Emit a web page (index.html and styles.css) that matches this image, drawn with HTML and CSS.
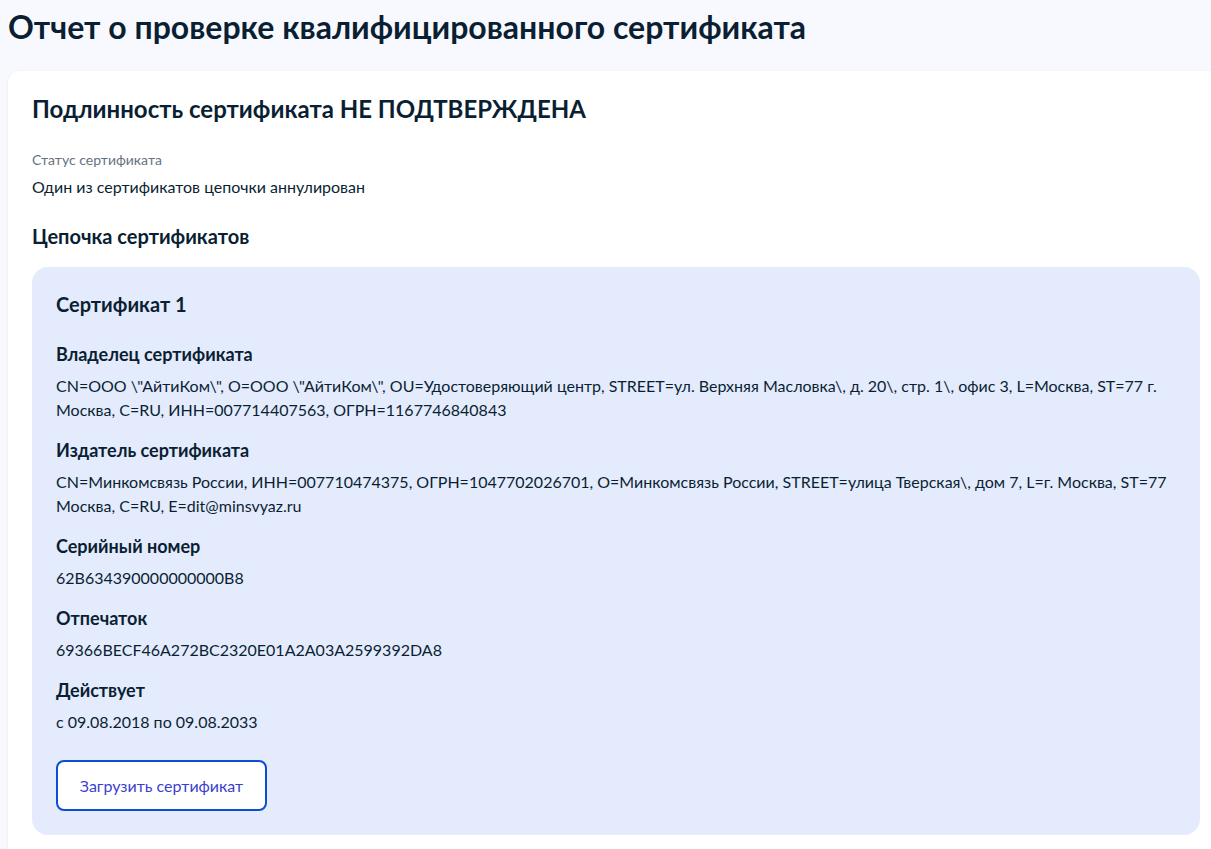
FILE: index.html
```html
<!DOCTYPE html>
<html lang="ru">
<head>
<meta charset="utf-8">
<title>Отчет о проверке квалифицированного сертификата</title>
<link rel="stylesheet" href="styles.css">
</head>
<body>
<main class="page">
  <h1 class="page-title">Отчет о проверке квалифицированного сертификата</h1>
  <section class="card">
    <h2 class="card-title">Подлинность сертификата НЕ ПОДТВЕРЖДЕНА</h2>
    <div class="status">
      <div class="status-label">Статус сертификата</div>
      <div class="status-value">Один из сертификатов цепочки аннулирован</div>
    </div>
    <h3 class="chain-title">Цепочка сертификатов</h3>
    <div class="cert">
      <h4 class="cert-title">Сертификат 1</h4>
      <div class="fields">
        <div class="field">
          <div class="field-name">Владелец сертификата</div>
          <div class="field-value">CN=ООО \"АйтиКом\", O=ООО \"АйтиКом\", OU=Удостоверяющий центр, STREET=ул. Верхняя Масловка\, д. 20\, стр. 1\, офис 3, L=Москва, ST=77 г. Москва, C=RU, ИНН=007714407563, ОГРН=1167746840843</div>
        </div>
        <div class="field">
          <div class="field-name">Издатель сертификата</div>
          <div class="field-value">CN=Минкомсвязь России, ИНН=007710474375, ОГРН=1047702026701, O=Минкомсвязь России, STREET=улица Тверская\, дом 7, L=г. Москва, ST=77 Москва, C=RU, E=dit@minsvyaz.ru</div>
        </div>
        <div class="field">
          <div class="field-name">Серийный номер</div>
          <div class="field-value">62B634390000000000B8</div>
        </div>
        <div class="field">
          <div class="field-name">Отпечаток</div>
          <div class="field-value">69366BECF46A272BC2320E01A2A03A2599392DA8</div>
        </div>
        <div class="field">
          <div class="field-name">Действует</div>
          <div class="field-value">с 09.08.2018 по 09.08.2033</div>
        </div>
      </div>
      <button class="btn-outline" type="button">Загрузить сертификат</button>
    </div>
  </section>
</main>
</body>
</html>
```

FILE: styles.css
```css
html, body {
  margin: 0;
  padding: 0;
  background: #f8f9fe;
  overflow: hidden;
}

body {
  font-family: Lato, "Noto Sans", Arial, sans-serif;
  color: #0b1f33;
}

.page {
  padding: 7px 0 0 8px;
  width: 1216px;
}

.page-title {
  margin: 0;
  font-size: 32px;
  line-height: 40px;
  font-weight: 700;
  color: #0b1f33;
}

.card {
  margin-top: 24px;
  background: #ffffff;
  border-radius: 12px;
  padding: 24px 24px 24px 24px;
  box-shadow: 0 1px 4px rgba(11, 31, 51, 0.06);
}

.card-title {
  margin: 0;
  font-size: 24px;
  line-height: 28px;
  font-weight: 700;
}

.status {
  margin-top: 27px;
  display: flex;
  flex-direction: column;
  gap: 5px;
}

.status-label {
  font-size: 14px;
  line-height: 20px;
  color: #66727f;
}

.status-value {
  font-size: 16px;
  line-height: 24px;
}

.chain-title {
  margin: 23px 0 0;
  font-size: 20px;
  line-height: 28px;
  font-weight: 700;
}

.cert {
  margin-top: 17px;
  background: #e4ebfd;
  border-radius: 16px;
  padding: 24px;
}

.cert-title {
  margin: 0 0 25px;
  font-size: 20px;
  line-height: 26px;
  font-weight: 700;
}

.fields {
  display: flex;
  flex-direction: column;
  gap: 16px;
}

.field-name {
  font-size: 18px;
  line-height: 24px;
  font-weight: 700;
  margin-bottom: 8px;
}

.field-value {
  font-size: 16px;
  line-height: 24px;
}

.btn-outline {
  display: block;
  margin-top: 26px;
  width: 211px;
  height: 51px;
  background: #ffffff;
  border: 2px solid #0d4cd3;
  border-radius: 8px;
  color: #3b3fcf;
  font-family: inherit;
  font-size: 16px;
  cursor: pointer;
}
```
